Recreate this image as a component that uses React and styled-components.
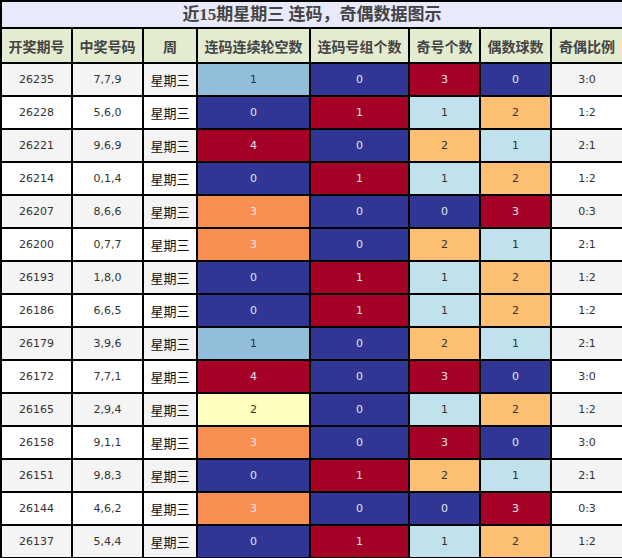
import React from 'react';
import styled, { createGlobalStyle } from 'styled-components';

const GlobalStyle = createGlobalStyle`
  body {
    margin: 0;
    background: #ffffff;
    font-family: "DejaVu Sans", "Noto Sans CJK SC", sans-serif;
  }
`;

const Table = styled.table`
  width: 622px;
  table-layout: fixed;
  border-collapse: collapse;
  border: 2px solid #000;
`;

const TitleCell = styled.th`
  height: 25px;
  padding: 0;
  background: #e8e9fb;
  border: 2px solid #000;
  color: #444;
  font-family: "Liberation Serif", "Noto Sans CJK SC", serif;
  font-size: 17px;
  font-weight: bold;
  text-align: center;
  line-height: 1;
`;

const HeadCell = styled.th`
  height: 33px;
  padding: 0;
  background: #e3ebd0;
  border: 2px solid #000;
  color: #444;
  font-family: "Noto Sans CJK SC", sans-serif;
  font-size: 14px;
  font-weight: bold;
  text-align: center;
  white-space: nowrap;
`;

const Row = styled.tr`
  background: ${props => (props.odd ? '#f4f4f4' : '#ffffff')};
`;

const Cell = styled.td`
  height: 31px;
  padding: 0;
  border: 2px solid #000;
  color: #333;
  font-size: 11px;
  text-align: center;
`;

const WeekCell = styled(Cell)`
  color: #111;
  font-family: "Noto Sans CJK SC", sans-serif;
  font-size: 13px;
`;

const ColorCell = styled(Cell)`
  background: ${props => props.bg};
  color: ${props => (props.light ? '#e4e4ee' : '#333')};
`;

const PALETTE = {
  blue: ['#313695', true],
  red: ['#a50026', true],
  sky: ['#91bfdb', false],
  cyan: ['#bfe2ec', false],
  peach: ['#fdbf71', false],
  orange: ['#fa8f52', true],
  yellow: ['#ffffbf', false],
};

const GAP_COLORS = ['blue', 'sky', 'yellow', 'orange', 'red'];
const GROUP_COLORS = ['blue', 'red'];
const COUNT_COLORS = ['blue', 'cyan', 'peach', 'red'];

const COLUMNS = [
  { title: '开奖期号', width: 71 },
  { title: '中奖号码', width: 71 },
  { title: '周', width: 54 },
  { title: '连码连续轮空数', width: 113 },
  { title: '连码号组个数', width: 99 },
  { title: '奇号个数', width: 71 },
  { title: '偶数球数', width: 71 },
  { title: '奇偶比例', width: 72 },
];

// 期号, 号码, 轮空, 组数, 奇, 偶
const ROWS = [
  ['26235', '7,7,9', 1, 0, 3, 0],
  ['26228', '5,6,0', 0, 1, 1, 2],
  ['26221', '9,6,9', 4, 0, 2, 1],
  ['26214', '0,1,4', 0, 1, 1, 2],
  ['26207', '8,6,6', 3, 0, 0, 3],
  ['26200', '0,7,7', 3, 0, 2, 1],
  ['26193', '1,8,0', 0, 1, 1, 2],
  ['26186', '6,6,5', 0, 1, 1, 2],
  ['26179', '3,9,6', 1, 0, 2, 1],
  ['26172', '7,7,1', 4, 0, 3, 0],
  ['26165', '2,9,4', 2, 0, 1, 2],
  ['26158', '9,1,1', 3, 0, 3, 0],
  ['26151', '9,8,3', 0, 1, 2, 1],
  ['26144', '4,6,2', 3, 0, 0, 3],
  ['26137', '5,4,4', 0, 1, 1, 2],
];

const Colored = ({ value, scale }) => {
  const [bg, light] = PALETTE[scale[value]];
  return <ColorCell bg={bg} light={light}>{value}</ColorCell>;
};

const App = () => (
  <>
    <GlobalStyle />
    <Table>
      <colgroup>
        {COLUMNS.map(col => <col key={col.title} style={{ width: col.width }} />)}
      </colgroup>
      <thead>
        <tr>
          <TitleCell colSpan={8}>近15期星期三 连码，奇偶数据图示</TitleCell>
        </tr>
        <tr>
          {COLUMNS.map(col => <HeadCell key={col.title}>{col.title}</HeadCell>)}
        </tr>
      </thead>
      <tbody>
        {ROWS.map(([issue, nums, gap, groups, odd, even], i) => (
          <Row key={issue} odd={i % 2 === 0}>
            <Cell>{issue}</Cell>
            <Cell>{nums}</Cell>
            <WeekCell>星期三</WeekCell>
            <Colored value={gap} scale={GAP_COLORS} />
            <Colored value={groups} scale={GROUP_COLORS} />
            <Colored value={odd} scale={COUNT_COLORS} />
            <Colored value={even} scale={COUNT_COLORS} />
            <Cell>{odd}:{even}</Cell>
          </Row>
        ))}
      </tbody>
    </Table>
  </>
);

export default App;
